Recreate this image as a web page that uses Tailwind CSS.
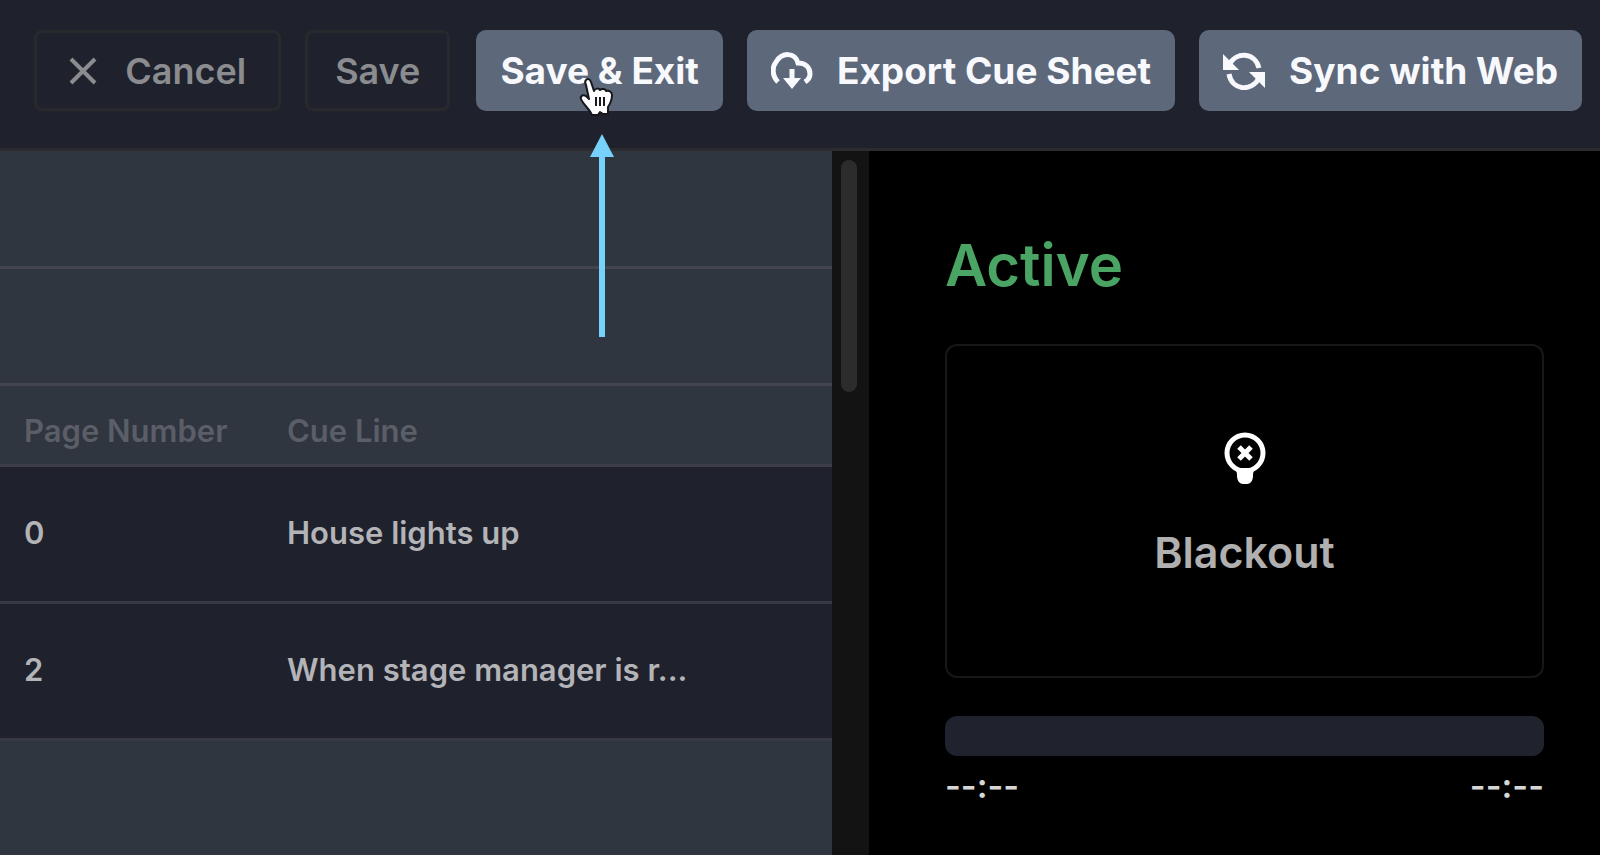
<!DOCTYPE html>
<html lang="en">
<head>
    <meta charset="UTF-8">
    <meta name="viewport" content="width=device-width, initial-scale=1.0">
    <title>Cue Sheet Editor</title>
    <script src="https://cdn.jsdelivr.net/npm/@tailwindcss/browser@4"></script>
</head>
<body class="h-screen flex flex-col bg-black font-['Inter','Liberation_Sans',sans-serif] antialiased overflow-hidden">

    <!-- Toolbar -->
    <header class="flex justify-end items-start gap-6 pt-[30px] pb-[37px] pr-[18px] pl-8 bg-[#1f212c] border-b-3 border-[#2b2b30]">
        <button type="button" class="h-[81px] px-8 flex items-center gap-7 rounded-lg border-3 border-[#27292d] text-[#8b8c90] text-[36px] font-semibold whitespace-nowrap">
            <svg class="size-7" viewBox="0 0 28 28" fill="none" stroke="currentColor" stroke-width="4">
                <path d="M2 2L26 26M26 2L2 26" />
            </svg>
            Cancel
        </button>
        <button type="button" class="h-[81px] px-[27px] mr-[2px] rounded-lg border-3 border-[#27292d] text-[#8b8c90] text-[36px] font-semibold whitespace-nowrap">Save</button>
        <div class="relative">
            <button type="button" class="h-[81px] px-6 rounded-[10px] bg-[#5e687b] text-[#f8f9fd] text-[37px] font-bold whitespace-nowrap">Save &amp; Exit</button>
            <!-- Pointer -->
            <svg class="absolute left-[102px] top-[46px] w-10 h-11" viewBox="0 0 40 44" fill="#fff" stroke="#16181d" stroke-width="2" stroke-linejoin="round">
                <path d="M8 4C9 2 12 3 13 6L16 15C17 12 21 12 22 14C24 12 28 13 28 15C31 14 34 16 34 19C34 25 32 28 30 31L30 38L25 38L22 36L20 39L14 39C12 34 7 30 4 25C1 21 4 18 8 20L11 23L8 9C7 7 7 5 8 4Z" />
                <path d="M18 21V30M22 21V30M26 21V30" fill="none" />
            </svg>
            <!-- Callout arrow -->
            <svg class="absolute left-[114px] top-[104px] w-6 h-[203px] z-10" viewBox="0 0 24 203" fill="#76d1fb">
                <path d="M12 0L24 23H15V203H9V23H0Z" />
            </svg>
        </div>
        <button type="button" class="h-[81px] px-6 flex items-center gap-6 rounded-[10px] bg-[#5e687b] text-[#f8f9fd] text-[37px] font-bold whitespace-nowrap">
            <svg class="w-[42px] h-[38px]" viewBox="0 0 42 38" fill="none" stroke="currentColor" stroke-width="5">
                <path d="M7 30C1 24 1 15 5 10C11 0 24 0 27 11C35 11 39 16 39 22C39 25 37 28 34 30" />
                <path d="M21 17V30" />
                <path d="M12 26H30L21 37Z" fill="currentColor" stroke="none" />
            </svg>
            Export Cue Sheet
        </button>
        <button type="button" class="h-[81px] px-6 flex items-center gap-6 rounded-[10px] bg-[#5e687b] text-[#f8f9fd] text-[37px] font-bold whitespace-nowrap">
            <svg class="w-[42px] h-[38px]" viewBox="0 0 42 38" fill="none" stroke="currentColor" stroke-width="5">
                <path d="M6 13C13 -1 32 0 36 16M6 22C9 39 29 40 36 26" />
                <path d="M0 2V18H16ZM42 36V20H26Z" fill="currentColor" stroke="none" />
            </svg>
            Sync with Web
        </button>
    </header>

    <main class="flex flex-1 min-h-0">
        <!-- Cue list -->
        <section class="w-[52%] bg-[#2f3640]">
            <div class="h-[118px] border-b-3 border-[#42444f]"></div>
            <div class="h-[117px] border-b-3 border-[#42444f]"></div>
            <table class="w-full table-fixed border-collapse text-left">
                <thead>
                    <tr class="h-[79px] border-b-3 border-[#3c3d49] text-[31px] text-[#5b5e66]">
                        <th scope="col" class="w-[263px] pl-6 pt-3 font-semibold">Page Number</th>
                        <th scope="col" class="pl-6 pt-3 font-semibold">Cue Line</th>
                    </tr>
                </thead>
                <tbody class="bg-[#1f212c] text-[31px] font-semibold text-[#b3b4b7]">
                    <tr class="h-[137px] border-b-3 border-[#373943]">
                        <td class="pl-6 pb-px">0</td>
                        <td class="pl-6 pb-px">House lights up</td>
                    </tr>
                    <tr class="h-[137px] border-b-3 border-[#373943]">
                        <td class="pl-6 pb-px">2</td>
                        <td class="pl-6 pb-px">When stage manager is r...</td>
                    </tr>
                </tbody>
            </table>
        </section>

        <!-- Scrollbar -->
        <div class="w-[37px] pt-[9px] pl-[9px] bg-[#131313]">
            <div class="w-4 h-[232px] rounded-full bg-[#2c2c2c]"></div>
        </div>

        <!-- Active cue -->
        <section class="flex-1 pl-[76px] pr-14 pt-[78px]">
            <h2 class="text-[58px] leading-[72px] font-semibold text-[#4aa564]">Active</h2>
            <div class="mt-[43px] h-[334px] flex flex-col items-center pt-[86px] rounded-xl border-2 border-[#171717]">
                <svg class="w-[42px] h-[52px]" viewBox="0 0 42 52" fill="none" stroke="#fff" stroke-width="5">
                    <circle cx="21" cy="21" r="18" />
                    <path d="M15 15L27 27M27 15L15 27" />
                    <path d="M10 36L32 36Q29 39 29 42V45Q28 52 23 52H19Q14 52 13 45V42Q13 39 10 36Z" fill="#fff" stroke="none" />
                </svg>
                <p class="mt-[38px] text-[43px] leading-[60px] font-semibold text-[#b0b0b0]">Blackout</p>
            </div>
            <div class="mt-[38px] h-10 rounded-xl bg-[#20222d]"></div>
            <div class="mt-[6px] flex justify-between text-[34px] leading-[48px] font-semibold text-[#d6d6d6]">
                <span>--:--</span>
                <span>--:--</span>
            </div>
        </section>
    </main>
</body>
</html>
